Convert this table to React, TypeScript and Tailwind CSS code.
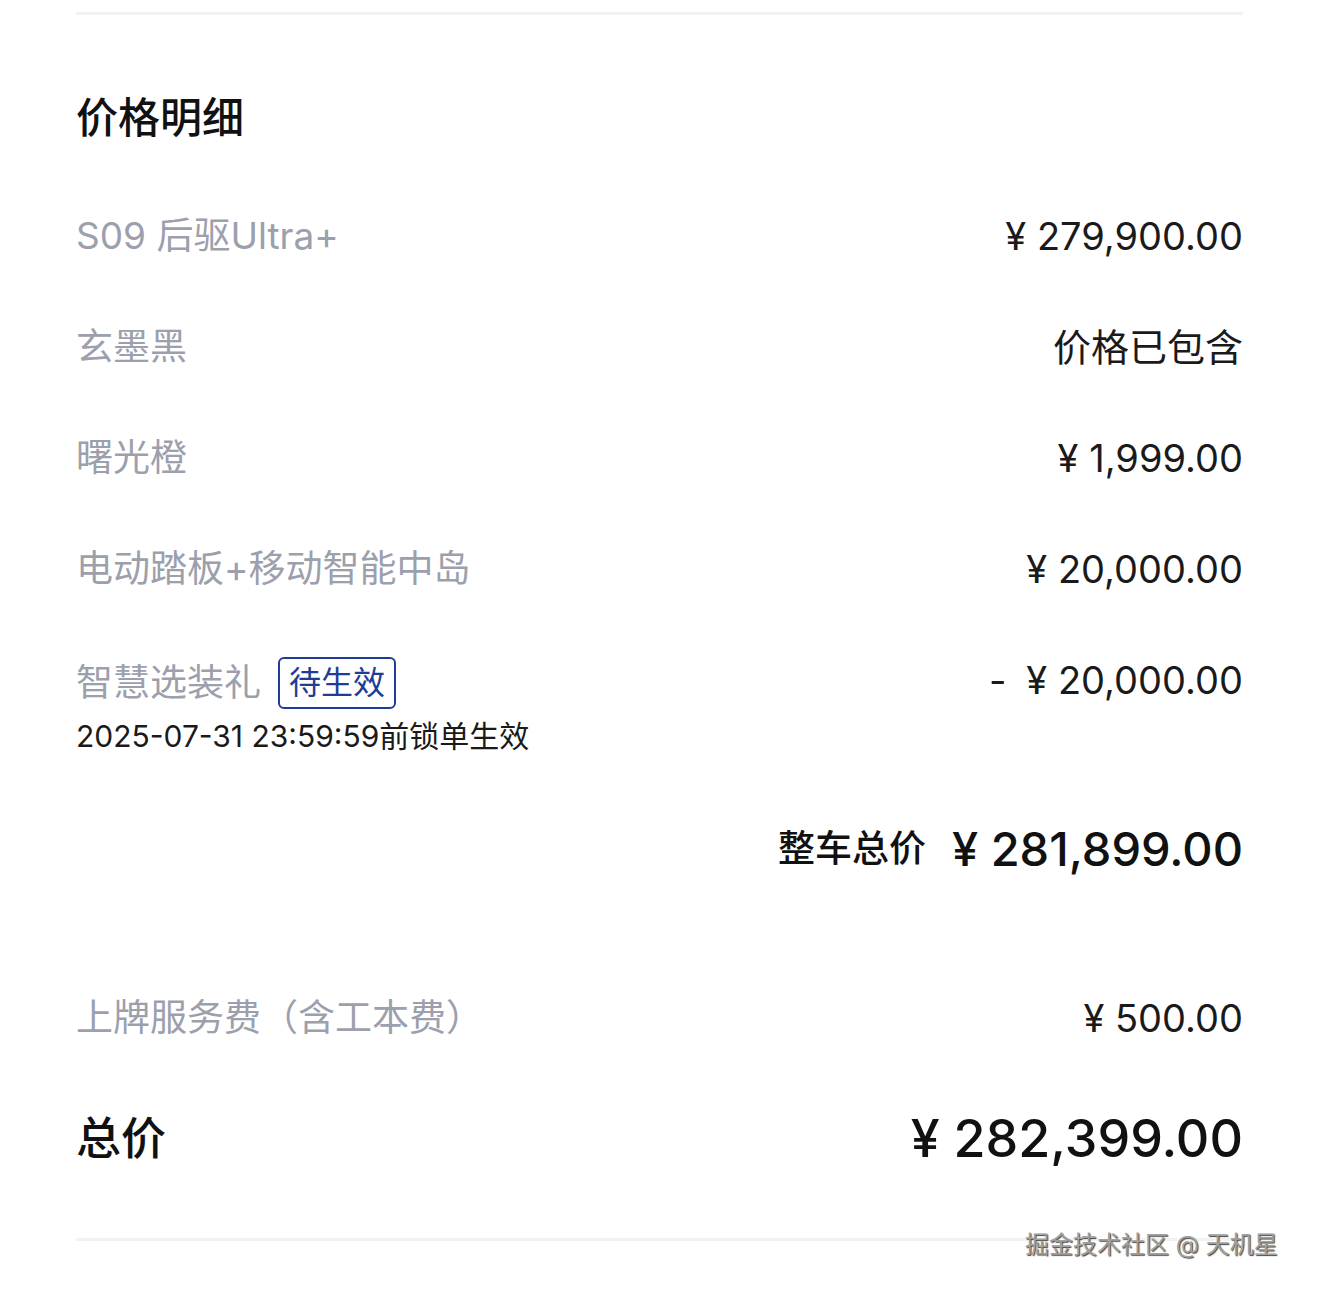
const font = "font-['Inter','Noto_Sans_CJK_SC',sans-serif]";

interface LineProps {
  label: string;
  value: string;
}

function PriceLine({ label, value }: LineProps) {
  return (
    <div className="flex h-[111px] items-center justify-between">
      <span className="text-[37px] leading-[44px] text-[#9c9fac]">{label}</span>
      <span className="text-[38px] leading-[44px] text-[#1a1a1a]">{value}</span>
    </div>
  );
}

export default function App() {
  return (
    <div className={`relative min-h-[1292px] w-full bg-white ${font}`}>
      <div className="pl-[76px] pr-[74px]">
        {/* верхний разделитель */}
        <div className="h-[12px]" />
        <div className="h-[3px] bg-[#f2f2f4]" />

        {/* заголовок */}
        <div className="flex h-[165px] items-start pt-[82px]">
          <h2 className="text-[42px] font-medium leading-[42px] text-[#111]">价格明细</h2>
        </div>

        <PriceLine label="S09 后驱Ultra+" value="¥ 279,900.00" />
        <PriceLine label="玄墨黑" value="价格已包含" />
        <PriceLine label="曙光橙" value="¥ 1,999.00" />
        <PriceLine label="电动踏板+移动智能中岛" value="¥ 20,000.00" />

        {/* подарок с бейджем */}
        <div className="flex justify-between pt-[33px]">
          <div>
            <div className="flex h-[52px] items-center gap-[17px]">
              <span className="text-[37px] leading-[44px] text-[#9c9fac]">智慧选装礼</span>
              <span className="flex h-[52px] items-center rounded-[6px] border-[2px] border-[#1f3d96] px-[9px] text-[32px] leading-none text-[#1f3d96]">
                待生效
              </span>
            </div>
            <div className="mt-[9px] text-[30px] leading-[36px] text-[#1a1a1a]">2025-07-31 23:59:59前锁单生效</div>
          </div>
          <div className="flex h-[46px] items-center text-[38px] leading-[44px] text-[#1a1a1a]">
            <span className="mr-[20px]">-</span>
            <span>¥ 20,000.00</span>
          </div>
        </div>

        {/*整车总价 */}
        <div className="mt-[70px] flex items-center justify-end gap-[26px]">
          <span className="text-[37px] font-medium leading-[50px] text-[#111]">整车总价</span>
          <span className="text-[47px] font-medium leading-[50px] text-[#111]">¥ 281,899.00</span>
        </div>

        <div className="mt-[88px]">
          <PriceLine label="上牌服务费（含工本费）" value="¥ 500.00" />
        </div>

        {/* итог */}
        <div className="mt-[16px] flex h-[100px] items-center justify-between">
          <span className="text-[45px] font-medium leading-[50px] text-[#111]">总价</span>
          <span className="text-[52px] font-medium leading-[60px] text-[#111]">¥ 282,399.00</span>
        </div>

        <div className="mt-[49px] h-[3px] bg-[#f2f2f4]" />
      </div>

      {/* водяной знак */}
      <div className="absolute left-[1025px] top-[1229px] text-[24px] leading-[32px] text-[#a0a0a0] [text-shadow:1px_1px_1px_#444,-1px_-1px_0_#fff]">
        掘金技术社区 @ 天机星
      </div>
    </div>
  );
}
